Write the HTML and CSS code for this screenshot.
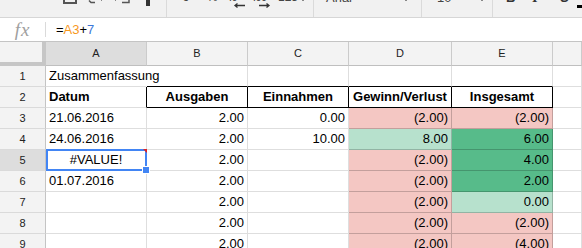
FILE: index.html
```html
<!DOCTYPE html>
<html lang="de">
<head>
    <meta charset="UTF-8">
    <meta name="viewport" content="width=device-width, initial-scale=1.0">
    <title>Zusammenfassung</title>
    <link rel="stylesheet" href="styles.css">
</head>
<body>

    <div class="toolbar">
        <svg class="tb-history" width="103" height="17" viewBox="0 0 103 17">
            <path d="M1 0 V3 H13 V0" fill="none" stroke="#555" stroke-width="2"/>
            <path d="M26 0.5 L28 2.5 H32" fill="none" stroke="#555" stroke-width="1.5"/>
            <rect x="38" y="0" width="1" height="1" fill="#888"/>
            <rect x="52" y="0" width="1" height="1" fill="#888"/>
            <path d="M59 2.5 H66 V0" fill="none" stroke="#555" stroke-width="1.5"/>
            <rect x="83" y="0" width="4" height="6" fill="#333"/>
        </svg>
        <div class="tb-sep"></div>
        <div class="tb-text tb-currency">€</div>
        <div class="tb-text tb-percent">%</div>
        <div class="tb-dec tb-dec-less">
            <span>.0</span>
            <svg width="14" height="5" viewBox="0 0 14 5"><path d="M2 2.5 H12 M4.5 0.5 L2 2.5 L4.5 4.5" fill="none" stroke="#333" stroke-width="1.3"/></svg>
        </div>
        <div class="tb-dec tb-dec-more">
            <span>.00</span>
            <svg width="14" height="5" viewBox="0 0 14 5"><path d="M2 2.5 H12 M9.5 0.5 L12 2.5 L9.5 4.5" fill="none" stroke="#333" stroke-width="1.3"/></svg>
        </div>
        <div class="tb-text tb-format">123</div>
        <div class="tb-caret tb-caret-sm"></div>
        <div class="tb-sep"></div>
        <div class="tb-text tb-font">Arial</div>
        <div class="tb-caret tb-caret-font"></div>
        <div class="tb-sep"></div>
        <div class="tb-text tb-size">10</div>
        <div class="tb-caret tb-caret-sm"></div>
        <div class="tb-sep"></div>
        <div class="tb-text tb-bold">B</div>
        <div class="tb-text tb-italic">I</div>
        <div class="tb-text tb-strike">S</div>
        <div class="tb-color"></div>
    </div>

    <div class="formula-bar">
        <div class="fx">fx</div>
        <div class="fx-sep"></div>
        <div class="formula">=<span class="ref">A3</span>+<span class="num">7</span></div>
    </div>

    <div class="sheet">
        <div class="corner"></div>
        <div class="col-head active-head">A</div>
        <div class="col-head">B</div>
        <div class="col-head">C</div>
        <div class="col-head">D</div>
        <div class="col-head">E</div>
        <div class="col-head"></div>

        <div class="row-head">1</div>
        <div class="cell overflow">Zusammenfassung</div>
        <div class="cell box-top"></div>
        <div class="cell box-top"></div>
        <div class="cell box-top"></div>
        <div class="cell box-top"></div>
        <div class="cell"></div>

        <div class="row-head">2</div>
        <div class="cell bold box-left">Datum</div>
        <div class="cell head-cell">Ausgaben</div>
        <div class="cell head-cell">Einnahmen</div>
        <div class="cell head-cell">Gewinn/Verlust</div>
        <div class="cell head-cell">Insgesamt</div>
        <div class="cell"></div>

        <div class="row-head">3</div>
        <div class="cell">21.06.2016</div>
        <div class="cell num-cell">2.00</div>
        <div class="cell num-cell">0.00</div>
        <div class="cell num-cell loss">(2.00)</div>
        <div class="cell num-cell loss">(2.00)</div>
        <div class="cell"></div>

        <div class="row-head">4</div>
        <div class="cell">24.06.2016</div>
        <div class="cell num-cell">2.00</div>
        <div class="cell num-cell">10.00</div>
        <div class="cell num-cell gain-light">8.00</div>
        <div class="cell num-cell gain">6.00</div>
        <div class="cell"></div>

        <div class="row-head active-head">5</div>
        <div class="cell center selected">#VALUE!
            <div class="selection"></div>
            <div class="error-mark"></div>
            <div class="fill-handle"></div>
        </div>
        <div class="cell num-cell">2.00</div>
        <div class="cell"></div>
        <div class="cell num-cell loss">(2.00)</div>
        <div class="cell num-cell gain">4.00</div>
        <div class="cell"></div>

        <div class="row-head">6</div>
        <div class="cell">01.07.2016</div>
        <div class="cell num-cell">2.00</div>
        <div class="cell"></div>
        <div class="cell num-cell loss">(2.00)</div>
        <div class="cell num-cell gain">2.00</div>
        <div class="cell"></div>

        <div class="row-head">7</div>
        <div class="cell"></div>
        <div class="cell num-cell">2.00</div>
        <div class="cell"></div>
        <div class="cell num-cell loss">(2.00)</div>
        <div class="cell num-cell gain-light">0.00</div>
        <div class="cell"></div>

        <div class="row-head">8</div>
        <div class="cell"></div>
        <div class="cell num-cell">2.00</div>
        <div class="cell"></div>
        <div class="cell num-cell loss">(2.00)</div>
        <div class="cell num-cell loss">(2.00)</div>
        <div class="cell"></div>

        <div class="row-head">9</div>
        <div class="cell"></div>
        <div class="cell num-cell">2.00</div>
        <div class="cell"></div>
        <div class="cell num-cell loss">(2.00)</div>
        <div class="cell num-cell loss">(4.00)</div>
        <div class="cell"></div>
    </div>

</body>
</html>
```

FILE: styles.css
```css
body {
    margin: 0;
    font-family: "Liberation Sans", Arial, sans-serif;
    background-color: #fff;
    color: #000;
    overflow: hidden;
}

/* toolbar, only the lower edge of it is in view */
.toolbar {
    display: flex;
    height: 17px;
    padding-left: 63px;
    background-color: #f1f1f1;
    border-bottom: 1px solid #d6d6d6;
    overflow: hidden;
    color: #444;
    font-size: 13px;
    line-height: 13px;
}

.tb-history {
    flex: none;
}

.tb-sep {
    flex: none;
    width: 1px;
    background-color: #dadada;
}

.tb-text {
    flex: none;
    margin-top: -9px;
}

.tb-currency {
    width: 25px;
    padding-left: 15px;
    font-size: 12px;
}

.tb-percent {
    width: 22px;
    font-size: 12px;
}

.tb-dec {
    flex: none;
    display: flex;
    flex-direction: column;
    margin-top: -7px;
    font-size: 10px;
    line-height: 10px;
    color: #333;
}

.tb-dec-less {
    width: 24px;
}

.tb-dec-less svg {
    margin-left: 4px;
}

.tb-dec-more {
    width: 25px;
}

.tb-dec-more svg {
    margin-left: 4px;
}

.tb-format {
    width: 24px;
    font-size: 12px;
}

.tb-caret {
    flex: none;
}

.tb-caret::before {
    content: "";
    display: block;
    width: 2px;
    height: 1px;
    background-color: #888;
}

.tb-caret-sm {
    width: 11px;
}

.tb-caret-font {
    width: 16px;
}

.tb-font {
    width: 79px;
    padding-left: 12px;
}

.tb-size {
    width: 44px;
    padding-left: 15px;
}

.tb-bold {
    width: 26px;
    padding-left: 13px;
    font-weight: bold;
    color: #333;
}

.tb-italic {
    width: 28px;
    font-family: "Liberation Serif", serif;
    font-weight: bold;
    font-size: 14px;
    color: #333;
}

.tb-strike {
    width: 17px;
    font-weight: bold;
    color: #333;
}

.tb-color {
    flex: none;
    width: 6px;
    height: 3px;
    margin-top: 5px;
    background-color: #000;
}

/* formula bar */
.formula-bar {
    display: flex;
    align-items: center;
    height: 23px;
    border-bottom: 1px solid #c4c4c4;
}

.fx {
    width: 45px;
    text-align: center;
    font-family: "Liberation Serif", serif;
    font-style: italic;
    font-size: 19px;
    letter-spacing: 1px;
    color: #a0a0a0;
}

.fx-sep {
    width: 1px;
    height: 15px;
    background-color: #dadada;
}

.formula {
    padding-left: 10px;
    font-size: 13px;
}

.formula .ref {
    color: #f7981d;
}

.formula .num {
    color: #3c78d8;
}

/* grid */
.sheet {
    display: grid;
    grid-template-columns: 46px 101px 101px 101px 103px 101px 1fr;
    grid-template-rows: 24px repeat(9, 21px);
}

.corner {
    box-sizing: border-box;
    background-color: #f3f3f3;
    border-right: 4px solid #c6c6c6;
    border-bottom: 4px solid #c6c6c6;
}

.col-head {
    box-sizing: border-box;
    background-color: #f3f3f3;
    border-right: 1px solid #cbcbcb;
    border-bottom: 1px solid #bfbfbf;
    text-align: center;
    font-size: 11px;
    line-height: 23px;
    color: #222;
}

.row-head {
    box-sizing: border-box;
    background-color: #f3f3f3;
    border-right: 1px solid #c4c4c4;
    border-bottom: 1px solid #dadada;
    text-align: center;
    font-size: 11px;
    line-height: 20px;
    color: #222;
}

.active-head {
    background-color: #dddddd;
}

.cell {
    box-sizing: border-box;
    padding: 0 3px;
    border-right: 1px solid rgba(0, 0, 0, 0.13);
    border-bottom: 1px solid rgba(0, 0, 0, 0.13);
    font-size: 13px;
    line-height: 20px;
    white-space: nowrap;
    overflow: hidden;
}

.overflow {
    overflow: visible;
    border-right-color: transparent;
}

.bold {
    font-weight: bold;
}

.center {
    text-align: center;
}

.num-cell {
    text-align: right;
}

.box-top {
    border-bottom-color: #000;
}

.box-left {
    border-right-color: #000;
}

.head-cell {
    font-weight: bold;
    text-align: center;
    border-right-color: #000;
    border-bottom-color: #000;
}

.loss {
    background-color: #f4c7c3;
    border-color: rgba(0, 0, 0, 0.2);
}

.gain-light {
    background-color: #b7e1cd;
    border-color: rgba(0, 0, 0, 0.2);
}

.gain {
    background-color: #57bb8a;
    border-color: rgba(0, 0, 0, 0.2);
}

/* active cell */
.selected {
    position: relative;
    overflow: visible;
}

.selection {
    position: absolute;
    left: 0;
    top: -1px;
    right: -1px;
    bottom: -1px;
    border: 2px solid #4285f4;
}

.error-mark {
    position: absolute;
    top: -1px;
    right: -1px;
    width: 0;
    height: 0;
    border-top: 4px solid #dd2222;
    border-left: 4px solid transparent;
}

.fill-handle {
    position: absolute;
    right: -4px;
    bottom: -4px;
    width: 6px;
    height: 6px;
    background-color: #4285f4;
    border: 1px solid #fff;
}
```
